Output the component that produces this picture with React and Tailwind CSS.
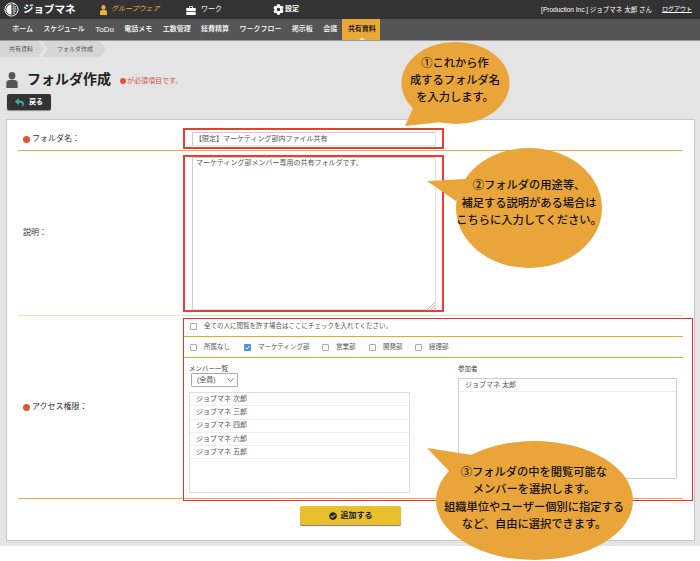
import React from "react";
import { FaCog, FaReply, FaCheckCircle } from "react-icons/fa";

const navItems = ["ホーム", "スケジュール", "ToDo", "電話メモ", "工数管理", "経費精算", "ワークフロー", "掲示板", "会議"];
const members = ["ジョブマネ 次郎", "ジョブマネ 三郎", "ジョブマネ 四郎", "ジョブマネ 六郎", "ジョブマネ 五郎"];
const groups = [
  { name: "所属なし", w: "w-[54px]" },
  { name: "マーケティング部", w: "w-[78px]", checked: true },
  { name: "営業部", w: "w-[47px]" },
  { name: "開発部", w: "w-[46px]" },
  { name: "経理部", w: "w-[40px]" },
];

function UserIcon({ className }) {
  return (
    <svg viewBox="0 0 12 17" className={className} fill="currentColor">
      <ellipse cx="6" cy="4" rx="3.6" ry="3.9" />
      <path d="M0 17v-5c0-2.2 1.5-3.4 3.2-3.4h5.6c1.7 0 3.2 1.2 3.2 3.4v5z" />
    </svg>
  );
}

function Logo() {
  return (
    <svg viewBox="0 0 16 16" className="h-[15px] w-[15px]">
      <circle cx="8" cy="8" r="7" fill="none" stroke="#fff" strokeWidth="1" />
      <path d="M8 2.4a5.6 5.6 0 0 0 0 11.2z" fill="#fff" />
      <path d="M9.2 3h2M9.2 5.2h3.6M9.2 7.4h4M9.2 9.6h3.8M9.2 11.8h2.6" stroke="#fff" strokeWidth="1" />
    </svg>
  );
}

function Briefcase() {
  return (
    <svg viewBox="0 0 10 10" className="h-[10px] w-[10px]" fill="#fff">
      <path d="M3 3V1.3h4V3h-.8V2H3.8v1z" />
      <path d="M0.3 3h9.4v3H0.3zM0.3 6.8h9.4V10H0.3z" />
    </svg>
  );
}

function Check({ checked }) {
  if (checked) {
    return (
      <span className="mt-[1px] flex h-[7px] w-[7px] items-center justify-center rounded-[1px] bg-[#4a8ff0]">
        <svg viewBox="0 0 7 7" className="h-[7px] w-[7px]">
          <path d="M1.5 3.7l1.4 1.4 2.6-3" fill="none" stroke="#fff" strokeWidth="1" />
        </svg>
      </span>
    );
  }
  return <span className="mt-[1px] h-[7px] w-[7px] rounded-[1px] border border-[#aaa] bg-white" />;
}

function Callouts() {
  return (
    <>
      <svg width="700" height="561" className="absolute left-0 top-0" fill="#e9a539">
        <ellipse cx="455.5" cy="83" rx="54" ry="41" />
        <path d="M405 126L413 108L442 122z" />
        <ellipse cx="529" cy="208" rx="73" ry="60" />
        <path d="M427 181L466 179L456 201z" />
        <ellipse cx="534.5" cy="500.5" rx="98.5" ry="59.5" />
        <path d="M427 448L472 455L450 472z" />
      </svg>
      <div className="absolute left-[395px] top-[55px] w-[120px] text-center text-[11.25px] font-medium leading-[17px] text-[#111]">
        ①これから作<br />成するフォルダ名<br />を入力します。
      </div>
      <div className="absolute left-[449px] top-[177px] w-[160px] text-center text-[11.25px] font-medium leading-[17.5px] text-[#111]">
        ②フォルダの用途等、<br />補足する説明がある場合は<br />こちらに入力してください。
      </div>
      <div className="absolute left-[434px] top-[464px] w-[200px] text-center text-[11.25px] font-medium leading-[17.4px] text-[#111]">
        ③フォルダの中を閲覧可能な<br />メンバーを選択します。<br />組織単位やユーザー個別に指定する<br />など、自由に選択できます。
      </div>
    </>
  );
}

export default function App() {
  return (
    <div className="relative h-[561px] w-[700px] overflow-hidden bg-white font-['Liberation_Sans','Noto_Sans_CJK_JP',sans-serif] text-[#333]">
      <div className="h-[546px] bg-[#e4e4e4]">
        {/* top bar */}
        <div className="flex h-[19px] items-center bg-[#333] text-[7px] text-white">
          <div className="ml-[4px] flex w-[96px] items-center gap-[4px]">
            <Logo />
            <span className="text-[10.5px] font-bold">ジョブマネ</span>
          </div>
          <div className="flex w-[86px] items-center gap-[4px] text-[#eeb02e]">
            <UserIcon className="h-[10px] w-[7px]" />
            <span className="italic">グループウェア</span>
          </div>
          <div className="flex w-[87px] items-center gap-[5px]">
            <Briefcase />
            <span>ワーク</span>
          </div>
          <div className="flex items-center gap-[1px]">
            <FaCog className="h-[11px] w-[11px]" />
            <span className="font-bold">設定</span>
          </div>
          <div className="ml-auto mr-[8px] flex items-center">
            <span className="text-[6.5px]">[Production Inc.] ジョブマネ 太郎 さん</span>
            <span className="ml-[10px] text-[6px] underline">ログアウト</span>
          </div>
        </div>

        {/* nav */}
        <div className="flex h-[22px] border-b border-[#999] bg-[#555] pl-[7px] text-[7px] font-medium text-white">
          {navItems.map((item) => (
            <div key={item} className={item === "ToDo" ? "flex items-center px-[5.2px] text-[8px]" : "flex items-center px-[5.2px]"}>{item}</div>
          ))}
          <div className="relative flex w-[38px] items-center justify-center bg-[#eaa835] pl-[1px] font-bold text-[#222]">
            共有資料
            <span className="absolute bottom-0 left-[17px] h-0 w-0 border-x-[3px] border-b-[3px] border-x-transparent border-b-[#e4e4e4]" />
          </div>
        </div>

        {/* breadcrumb */}
        <div className="flex h-[16px] text-[6px] text-[#555]">
          <div className="flex w-[44px] items-center bg-[#d6d6d6] pl-[9px] [clip-path:polygon(0_0,38px_0,44px_50%,38px_100%,0_100%)]">共有資料</div>
          <div className="-ml-[2px] flex w-[64px] items-center bg-[#d6d6d6] pl-[15px] [clip-path:polygon(0_0,58px_0,64px_50%,58px_100%,0_100%,6px_50%)]">フォルダ作成</div>
        </div>

        {/* title */}
        <div className="mt-[14px] flex h-[17px] items-center pl-[6px]">
          <UserIcon className="h-[16px] w-[12px] text-[#555]" />
          <h1 className="ml-[9px] text-[14px] font-bold text-[#222]">フォルダ作成</h1>
          <span className="ml-[9px] mt-[3px] flex items-center text-[7px] text-[#d9534f]">
            <span className="mr-[1px] h-[6px] w-[6px] rounded-full bg-[#dd5533]" />が必須項目です。
          </span>
        </div>
        <div className="ml-[7px] mt-[6px] flex h-[16px] w-[44px] items-center rounded-[2px] bg-[#333] pl-[8px] text-[7px] font-bold text-white shadow-[0_1px_1px_#888]">
          <FaReply className="h-[9px] w-[9px] text-[#45a5a5]" />
          <span className="ml-[5px]">戻る</span>
        </div>

        {/* form card */}
        <div className="ml-[6px] mt-[9px] h-[422px] w-[689px] border border-[#c8c8c8] bg-white px-[11px]">
          <div className="flex h-[31px] items-center border-b border-[#f0ad3c] pt-[8px]">
            <div className="flex w-[166px] items-center pl-[5px] text-[8px]">
              <span className="mr-[2px] h-[7px] w-[7px] rounded-full bg-[#dd5533]" />フォルダ名：
            </div>
            <div className="ml-[8px] flex h-[14px] w-[244px] items-center border border-[#e2e2e2] border-l-[#ccc] border-t-[#ccc] pl-[2px] text-[7px] text-[#555]">
              【限定】マーケティング部内ファイル共有
            </div>
          </div>

          <div className="flex h-[165px] items-center border-b border-[#f7dfb4]">
            <div className="w-[166px] pl-[5px] text-[8px]">説明：</div>
            <div className="relative ml-[8px] h-[153px] w-[244px] border border-[#e2e2e2] border-l-[#ccc] border-t-[#ccc] px-[3px] text-[7px] leading-[9px] text-[#555]">
              マーケティング部メンバー専用の共有フォルダです。
              <svg viewBox="0 0 8 8" className="absolute bottom-0 right-0 h-[8px] w-[8px]">
                <path d="M1 8l7-7M4 8l4-4M6.5 8L8 6.5" stroke="#999" strokeWidth="0.7" />
              </svg>
            </div>
          </div>

          <div className="flex h-[183px] items-center border-b border-[#f0ad3c]">
            <div className="flex w-[166px] items-center pl-[5px] text-[8px]">
              <span className="mr-[2px] h-[7px] w-[7px] rounded-full bg-[#dd5533]" />アクセス権限：
            </div>
            <div className="h-full flex-1 text-[6.5px] text-[#555]">
              <div className="flex h-[21px] items-center border-b border-[#e9a539] pl-[6px]">
                <Check />
                <span className="ml-[7px]">全ての人に閲覧を許す場合はここにチェックを入れてください。</span>
              </div>
              <div className="flex h-[21px] items-center border-b border-[#e9a539] pl-[6px]">
                {groups.map((g) => (
                  <div key={g.name} className={`flex items-center ${g.w}`}>
                    <Check checked={g.checked} />
                    <span className="ml-[7px]">{g.name}</span>
                  </div>
                ))}
              </div>
              <div className="flex pt-[6px]">
                <div className="w-[274px] pl-[5px]">
                  <div className="h-[9px] leading-[9px] text-[#444]">メンバー一覧</div>
                  <div className="ml-[2px] flex h-[14px] w-[47px] items-center justify-between rounded-[1px] border border-[#aaa] pl-[5px] pr-[3px] text-[7px]">
                    (全員)
                    <svg viewBox="0 0 7 4" className="h-[4px] w-[7px]">
                      <path d="M0.5 0.5L3.5 3.3l3-2.8" fill="none" stroke="#555" strokeWidth="0.8" />
                    </svg>
                  </div>
                  <div className="mt-[5px] h-[101px] w-[221px] rounded-[1px] border border-[#ddd] text-[7px]">
                    {members.map((m) => (
                      <div key={m} className="flex h-[13.25px] items-center border-b border-[#eee] pl-[6px]">{m}</div>
                    ))}
                  </div>
                </div>
                <div>
                  <div className="h-[9px] leading-[9px] text-[#444]">参加者</div>
                  <div className="mt-[5px] h-[101px] w-[219px] rounded-[1px] border border-[#ccc] text-[7px]">
                    <div className="flex h-[13px] items-center border-b border-[#eee] pl-[6px]">ジョブマネ 太郎</div>
                  </div>
                </div>
              </div>
            </div>
          </div>

          <div className="ml-[282px] mt-[7px] flex h-[19px] w-[101px] items-center justify-center rounded-[2px] bg-[#e8c02e] text-[8px] font-bold text-[#222] shadow-[0_1px_1px_#777]">
            <FaCheckCircle className="mr-[4px] h-[8px] w-[8px]" />追加する
          </div>
        </div>
      </div>

      {/* red annotation boxes */}
      <div className="absolute left-[183px] top-[128px] h-[21px] w-[261px] border-2 border-[#ea3c34]" />
      <div className="absolute left-[183px] top-[155px] h-[157px] w-[261px] border-2 border-[#ea3c34]" />
      <div className="absolute left-[183px] top-[318px] h-[183px] w-[510px] border border-[#e8302a]" />
      <Callouts />
    </div>
  );
}
